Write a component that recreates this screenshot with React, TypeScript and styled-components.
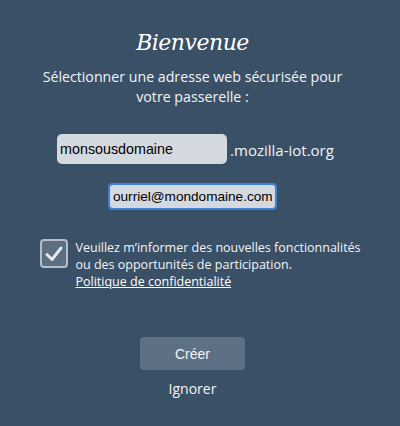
import React from "react";
import styled, { createGlobalStyle } from "styled-components";

const Global = createGlobalStyle`
  html, body { margin: 0; padding: 0; background: #3a5066; }
  body { font-family: "Open Sans", sans-serif; }
`;

const Page = styled.div`
  box-sizing: border-box;
  width: 385px;
  height: 426px;
  padding-top: 28px;
  display: flex;
  flex-direction: column;
  align-items: center;
  color: #ffffff;
`;

const Title = styled.h1`
  margin: 0;
  font-family: "DejaVu Serif", serif;
  font-style: italic;
  font-weight: normal;
  font-size: 22px;
  line-height: 30px;
  letter-spacing: -0.5px;
`;

const Subtitle = styled.p`
  margin: 9px 0 0;
  font-size: 14.2px;
  line-height: 20px;
  text-align: center;
  color: #f2f4f6;
`;

const DomainRow = styled.div`
  margin-top: 27px;
  display: flex;
  align-items: center;
  gap: 3px;
  padding-left: 6px;
`;

const TextField = styled.input<{ $focused?: boolean }>`
  box-sizing: border-box;
  width: ${(p) => (p.$focused ? "165px" : "170px")};
  height: ${(p) => (p.$focused ? "23px" : "30px")};
  padding: 0 3px;
  border: none;
  border-radius: ${(p) => (p.$focused ? "2px" : "5px")};
  background: #d4d9e0;
  color: #000;
  font-family: "Liberation Sans", Arial, sans-serif;
  font-size: ${(p) => (p.$focused ? "13.6px" : "14.3px")};
  outline: ${(p) => (p.$focused ? "2px solid #3d7fd9" : "none")};
  outline-offset: 0;
`;

const Suffix = styled.span`
  font-size: 15px;
  color: #f2f4f6;
  padding-top: 2px;
`;

const EmailWrap = styled.div`
  margin-top: 20px;
`;

const OptIn = styled.div`
  margin-top: 31px;
  margin-left: 18px;
  width: 324px;
  display: flex;
  align-items: flex-start;
  gap: 8px;
`;

const Box = styled.div`
  box-sizing: border-box;
  flex: none;
  width: 28px;
  height: 29px;
  border: 2px solid #b5bec8;
  border-radius: 4px;
  background: #5d6e81;
  display: flex;
  align-items: center;
  justify-content: center;
`;

const OptText = styled.div`
  font-size: 12.5px;
  line-height: 17px;
  color: #f2f4f6;
  white-space: nowrap;
`;

const Link = styled.a`
  color: #ffffff;
  text-decoration: underline;
`;

const Button = styled.button`
  margin-top: 47px;
  width: 105px;
  height: 33px;
  border: none;
  border-radius: 4px;
  background: #5e7184;
  color: #f2f4f6;
  font-family: "Liberation Sans", Arial, sans-serif;
  font-size: 14px;
`;

const Skip = styled.div`
  margin-top: 9px;
  font-size: 14px;
  color: #f2f4f6;
`;

export default function App() {
  return (
    <>
      <Global />
      <Page>
        <Title>Bienvenue</Title>
        <Subtitle>
          Sélectionner une adresse web sécurisée pour
          <br />
          votre passerelle :
        </Subtitle>
        <DomainRow>
          <TextField defaultValue="monsousdomaine" />
          <Suffix>.mozilla-iot.org</Suffix>
        </DomainRow>
        <EmailWrap>
          <TextField $focused defaultValue="ourriel@mondomaine.com" />
        </EmailWrap>
        <OptIn>
          <Box>
            <svg width="20" height="18" viewBox="0 0 20 18">
              <path
                d="M3 9.5 L8 14.5 L17 3"
                fill="none"
                stroke="#e4e8ec"
                strokeWidth="3"
                strokeLinecap="round"
                strokeLinejoin="round"
              />
            </svg>
          </Box>
          <OptText>
            Veuillez m’informer des nouvelles fonctionnalités
            <br />
            ou des opportunités de participation.
            <br />
            <Link href="#">Politique de confidentialité</Link>
          </OptText>
        </OptIn>
        <Button>Créer</Button>
        <Skip>Ignorer</Skip>
      </Page>
    </>
  );
}
